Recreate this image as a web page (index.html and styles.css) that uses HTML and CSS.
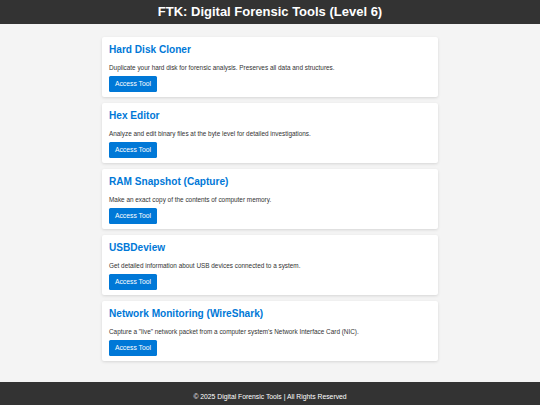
FILE: index.html
```html
<!DOCTYPE html>
<html lang="en">
<head>
<meta charset="utf-8">
<title>FTK: Digital Forensic Tools (Level 6)</title>
<link rel="stylesheet" href="styles.css">
</head>
<body>
<header class="site-header">
  <h1 class="site-title">FTK: Digital Forensic Tools (Level 6)</h1>
</header>
<main class="tools">
  <section class="tool-card">
    <h2 class="tool-name">Hard Disk Cloner</h2>
    <p class="tool-desc">Duplicate your hard disk for forensic analysis. Preserves all data and structures.</p>
    <button class="tool-btn">Access Tool</button>
  </section>
  <section class="tool-card">
    <h2 class="tool-name">Hex Editor</h2>
    <p class="tool-desc">Analyze and edit binary files at the byte level for detailed investigations.</p>
    <button class="tool-btn">Access Tool</button>
  </section>
  <section class="tool-card">
    <h2 class="tool-name">RAM Snapshot (Capture)</h2>
    <p class="tool-desc">Make an exact copy of the contents of computer memory.</p>
    <button class="tool-btn">Access Tool</button>
  </section>
  <section class="tool-card">
    <h2 class="tool-name">USBDeview</h2>
    <p class="tool-desc">Get detailed information about USB devices connected to a system.</p>
    <button class="tool-btn">Access Tool</button>
  </section>
  <section class="tool-card">
    <h2 class="tool-name">Network Monitoring (WireShark)</h2>
    <p class="tool-desc">Capture a "live" network packet from a computer system's Network Interface Card (NIC).</p>
    <button class="tool-btn">Access Tool</button>
  </section>
</main>
<footer class="site-footer">
  <p class="footer-text">&copy; 2025 Digital Forensic Tools | All Rights Reserved</p>
</footer>
</body>
</html>
```

FILE: styles.css
```css
* { box-sizing: border-box; }
html, body { margin: 0; padding: 0; }
body {
  font-family: "Liberation Sans", Arial, sans-serif;
  background: #f4f4f4;
  color: #333;
  min-height: 100vh;
  display: flex;
  flex-direction: column;
}
.site-header {
  background: #333;
  color: #fff;
  height: 24px;
  display: flex;
  align-items: center;
  justify-content: center;
}
.site-title {
  margin: 0;
  font-size: 13px;
  line-height: 16px;
  font-weight: bold;
}
.tools {
  flex: 1;
  width: 336px;
  margin: 0 auto;
  padding: 13px 0 21px;
  display: flex;
  flex-direction: column;
  gap: 6px;
}
.tool-card {
  background: #fff;
  border-radius: 2px;
  box-shadow: 0 1px 3px rgba(0, 0, 0, 0.12);
  padding: 6px 7px 5px;
  display: flex;
  flex-direction: column;
  align-items: flex-start;
}
.tool-name {
  margin: 0;
  font-size: 10.1px;
  line-height: 13px;
  color: #0078d7;
  font-weight: bold;
}
.tool-desc {
  margin: 8px 0 4px;
  font-size: 6.4px;
  line-height: 8px;
  color: #333;
}
.tool-btn {
  font-family: inherit;
  font-size: 6.8px;
  line-height: 8px;
  color: #fff;
  background: #0078d7;
  border: none;
  border-radius: 1.5px;
  width: 48px;
  height: 16px;
  padding: 0;
}
.site-footer {
  background: #333;
  color: #fff;
  height: 23px;
  padding-top: 11px;
  text-align: center;
}
.footer-text {
  margin: 0;
  font-size: 6.8px;
  line-height: 8px;
}
```
